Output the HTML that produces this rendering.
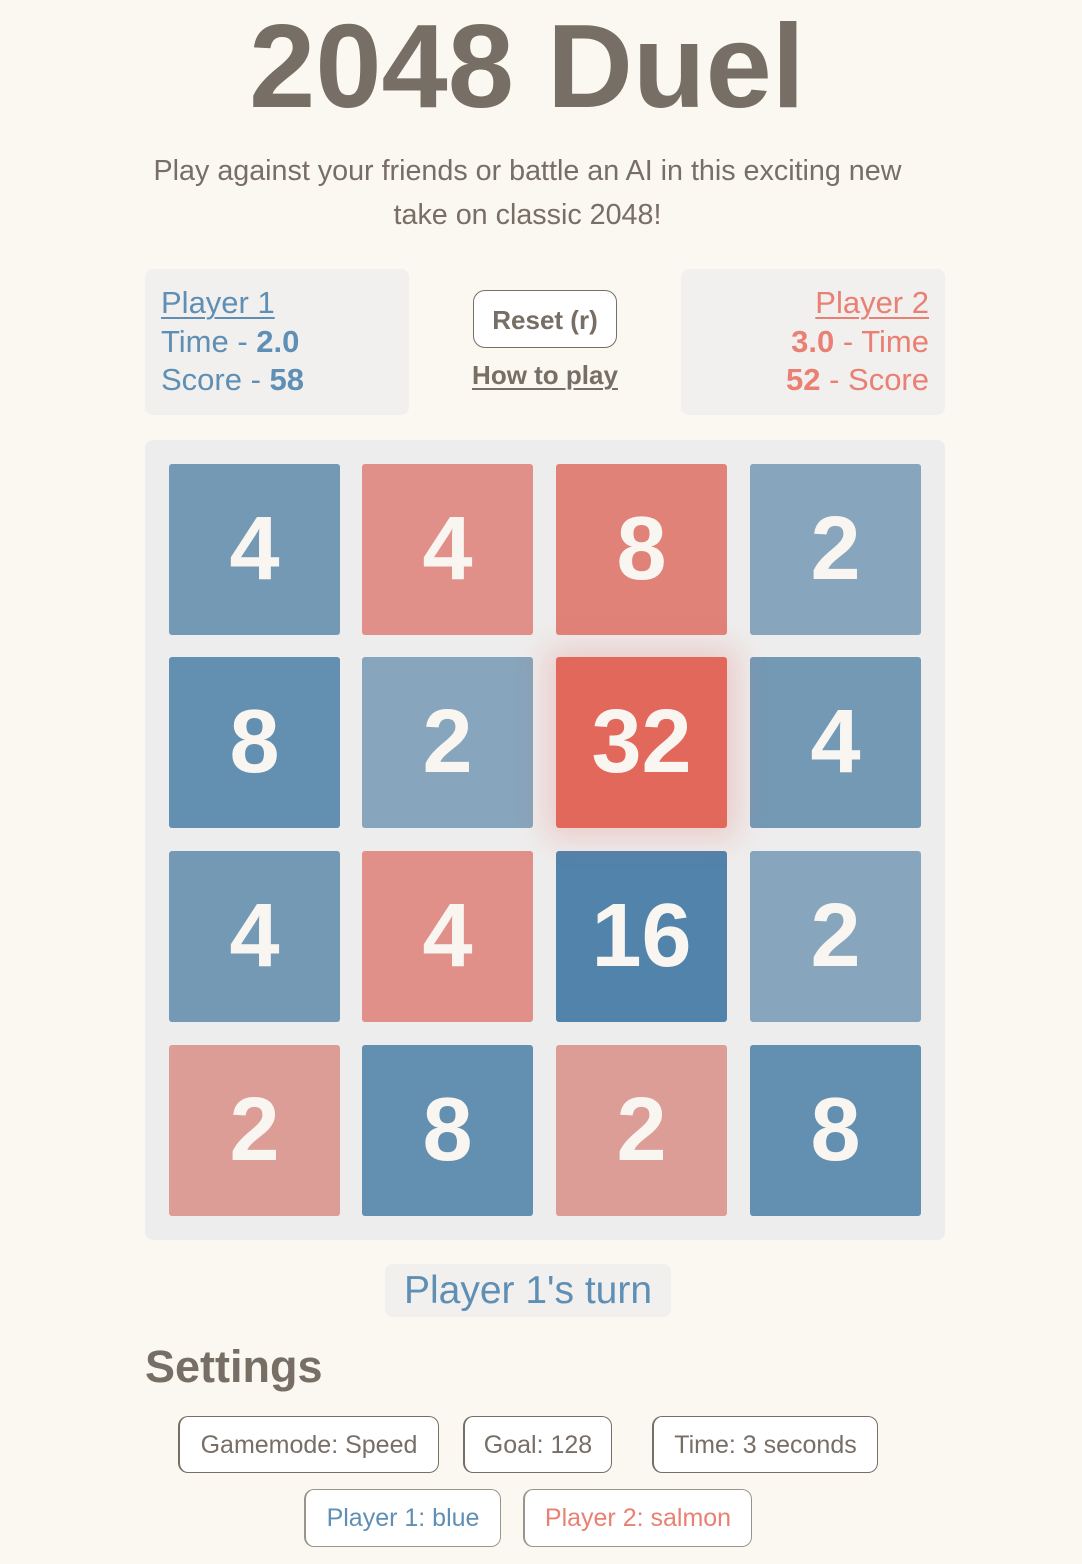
<!DOCTYPE html>
<html><head><meta charset="utf-8"><style>
*{margin:0;padding:0;box-sizing:border-box}
body{width:1082px;height:1564px;background:#faf8f1;font-family:"Liberation Sans",sans-serif;color:#776e65;position:relative;overflow:hidden}
.abs{position:absolute}
h1{position:absolute;left:0;width:1054px;top:2px;text-align:center;font-size:119px;font-weight:bold;line-height:130px;color:#776e65}
.sub{left:140px;width:775px;top:149px;text-align:center;font-size:28.7px;line-height:44px;color:#776e65}
.panel{background:#f1f0ee;border-radius:8px;top:269px;height:146px;font-size:31px;line-height:38.5px;padding:15px 16px}
.blue{color:#5f8fb4}.red{color:#e98073}
u{text-decoration:underline;text-decoration-thickness:2px;text-underline-offset:4px}
.board{left:145px;top:440px;width:800px;height:800px;background:#eeeded;border-radius:8px}
.t{position:absolute;width:171px;height:171px;border-radius:3px;color:#f9f6f2;font-weight:bold;font-size:90px;line-height:171px;text-align:center}
.btn{border:1px solid #776e65;border-left-width:2px;border-radius:10px;background:#fff;height:57px;line-height:57px;font-size:25px;text-align:center}
</style></head><body>
<h1>2048 Duel</h1>
<div class="abs sub">Play against your friends or battle an AI in this exciting new take on classic 2048!</div>
<div class="abs panel blue" style="left:145px;width:264px"><u>Player 1</u><br>Time - <b>2.0</b><br>Score - <b>58</b></div>
<div class="abs panel red" style="left:681px;width:264px;text-align:right"><u>Player 2</u><br><b>3.0</b> - Time<br><b>52</b> - Score</div>
<div class="abs" style="left:473px;top:290px;width:144px;height:58px;border:1px solid #776e65;border-radius:12px;background:#fff;text-align:center;line-height:58px;font-size:26px;font-weight:bold">Reset (r)</div>
<div class="abs" style="left:470px;top:358px;width:150px;text-align:center;font-size:26px;font-weight:bold;line-height:34px"><u>How to play</u></div>
<div class="abs board">
<div class="t" style="left:24px;top:24px;background:#7499b5">4</div>
<div class="t" style="left:217px;top:24px;background:#e09089">4</div>
<div class="t" style="left:411px;top:24px;background:#e08278">8</div>
<div class="t" style="left:605px;top:24px;background:#87a5bc">2</div>
<div class="t" style="left:24px;top:217px;background:#638fb1">8</div>
<div class="t" style="left:217px;top:217px;background:#87a5bc">2</div>
<div class="t" style="left:411px;top:217px;background:#e2685c;box-shadow:0 0 30px 10px rgba(226,104,92,.25);z-index:2">32</div>
<div class="t" style="left:605px;top:217px;background:#7499b5">4</div>
<div class="t" style="left:24px;top:411px;background:#7499b5">4</div>
<div class="t" style="left:217px;top:411px;background:#e09089">4</div>
<div class="t" style="left:411px;top:411px;background:#5283ab">16</div>
<div class="t" style="left:605px;top:411px;background:#87a5bc">2</div>
<div class="t" style="left:24px;top:605px;background:#dd9d97">2</div>
<div class="t" style="left:217px;top:605px;background:#638fb1">8</div>
<div class="t" style="left:411px;top:605px;background:#dd9d97">2</div>
<div class="t" style="left:605px;top:605px;background:#638fb1">8</div>
</div>
<div class="abs blue" style="left:385px;top:1264px;width:286px;height:53px;background:#f1f0ee;border-radius:8px;text-align:center;font-size:39px;line-height:53px">Player 1's turn</div>
<div class="abs" style="left:145px;top:1340px;font-size:45px;font-weight:bold;line-height:54px">Settings</div>
<div class="abs btn" style="left:178px;top:1416px;width:261px">Gamemode: Speed</div>
<div class="abs btn" style="left:463px;top:1416px;width:149px">Goal: 128</div>
<div class="abs btn" style="left:652px;top:1416px;width:226px">Time: 3 seconds</div>
<div class="abs btn blue" style="left:304px;top:1489px;width:197px;height:58px;border-color:#9b948c">Player 1: blue</div>
<div class="abs btn red" style="left:523px;top:1489px;width:229px;height:58px;border-color:#9b948c">Player 2: salmon</div>
</body></html>
